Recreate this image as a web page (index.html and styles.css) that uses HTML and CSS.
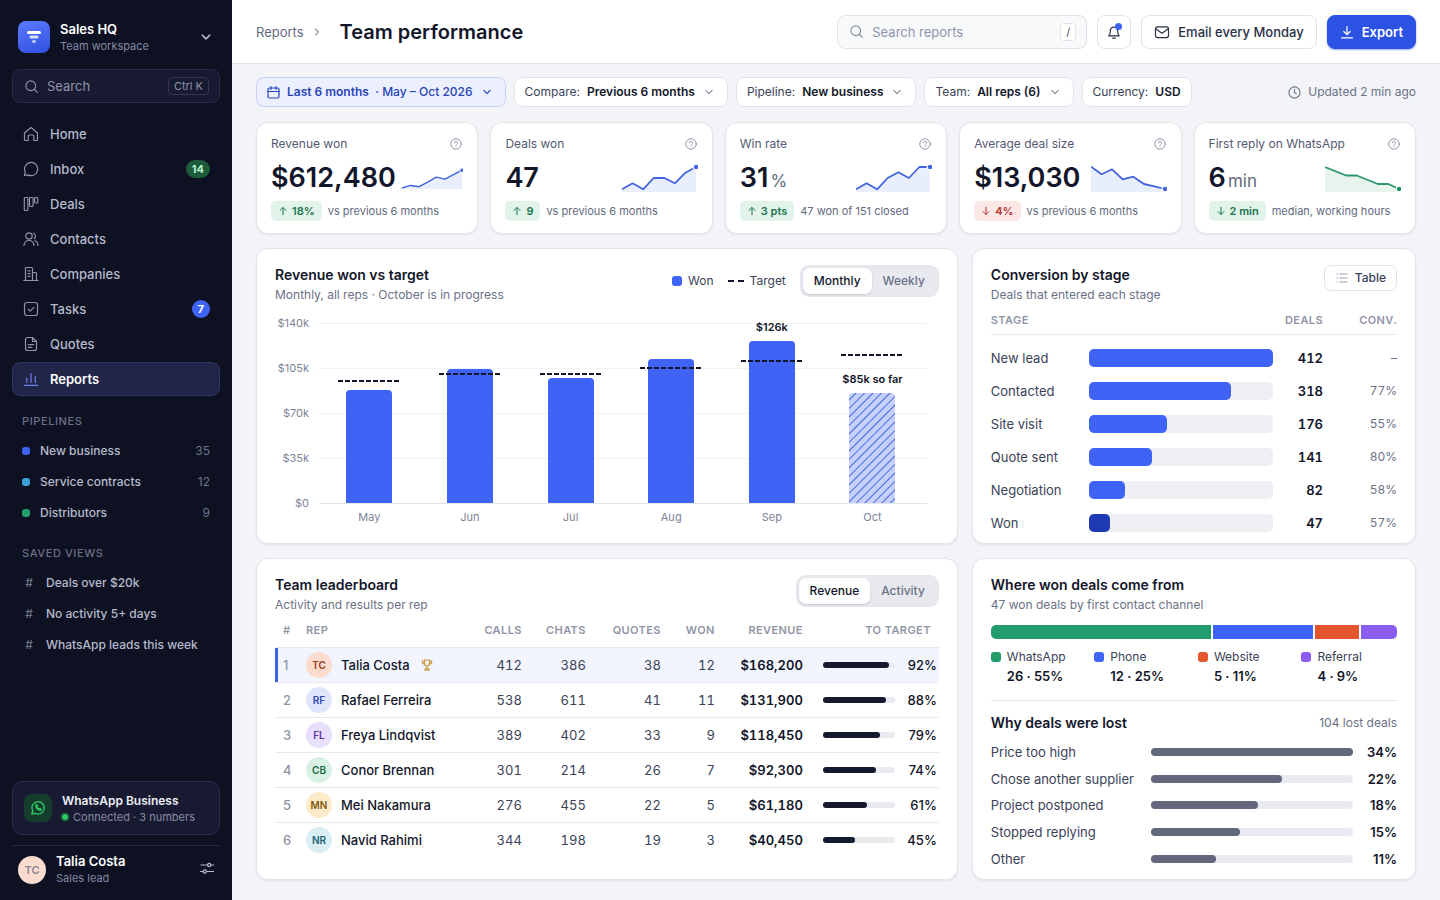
FILE: index.html
```
<!DOCTYPE html>
<html lang="en">
<head>
    <meta charset="UTF-8">
    <meta name="viewport" content="width=device-width, initial-scale=1.0">
    <title>Team performance - Sales HQ</title>
    <link rel="stylesheet" href="styles.css">
</head>
<body>
    <!-- shared icons -->
    <svg class="sprite" aria-hidden="true">
        <symbol id="i-search" viewBox="0 0 16 16"><circle cx="7.2" cy="7.2" r="5.200"/><path d="M11.200 11.200l3 3"/></symbol>
        <symbol id="i-down" viewBox="0 0 16 16"><path d="M3 5.500l5 5 5-5" stroke-width="1.900"/></symbol>
        <symbol id="i-help" viewBox="0 0 16 16"><circle cx="8" cy="8" r="7"/><path d="M6 6.300a2 2 0 1 1 2.900 1.800c-.6.3-.9.6-.9 1.200M8 11.500v.2"/></symbol>
        <symbol id="i-up-arrow" viewBox="0 0 12 12"><path d="M6 10.500V2M2.500 5.300L6 1.800l3.500 3.500"/></symbol>
        <symbol id="i-down-arrow" viewBox="0 0 12 12"><path d="M6 1.500V10M2.500 6.700L6 10.200l3.500-3.500"/></symbol>
    </svg>

    <div class="app">
        <aside class="sidebar">
            <button class="brand" type="button">
                <span class="brand-logo">
                    <svg width="32" height="32" viewBox="0 0 32 32"><rect x="9" y="10" width="14" height="3" rx="1.500" fill="#fff"/><rect x="11.500" y="14.500" width="9" height="3" rx="1.500" fill="#fff" opacity=".8"/><rect x="14" y="19" width="4" height="3" rx="1.500" fill="#fff" opacity=".65"/></svg>
                </span>
                <span class="brand-text">
                    <strong>Sales HQ</strong>
                    <small>Team workspace</small>
                </span>
                <svg class="icon" width="12" height="12"><use href="#i-down"/></svg>
            </button>

            <label class="side-search">
                <svg class="icon" width="15" height="15"><use href="#i-search"/></svg>
                <input type="text" placeholder="Search" aria-label="Search">
                <kbd>Ctrl K</kbd>
            </label>

            <nav class="nav">
                <a href="#"><svg class="icon" width="16" height="16" viewBox="0 0 16 16"><path d="M1.500 7L8 1.500 14.500 7v6.500a1 1 0 0 1-1 1h-2.700V10a1 1 0 0 0-1-1H6.200a1 1 0 0 0-1 1v4.500H2.500a1 1 0 0 1-1-1z"/></svg>Home</a>
                <a href="#"><svg class="icon" width="16" height="16" viewBox="0 0 16 16"><path d="M1.500 14.500l.8-3.300A6.600 6.600 0 1 1 5 13.900z"/></svg>Inbox<span class="badge badge-green">14</span></a>
                <a href="#"><svg class="icon" width="16" height="16" viewBox="0 0 16 16"><rect x="1.300" y="1.500" width="3.600" height="13" rx="1"/><rect x="6.500" y="1.500" width="3.600" height="9" rx="1"/><rect x="11.600" y="1.500" width="3.200" height="5.500" rx="1"/></svg>Deals</a>
                <a href="#"><svg class="icon" width="16" height="16" viewBox="0 0 16 16"><circle cx="6" cy="5" r="3.200"/><path d="M1 14.500c.2-3 2-5 5-5s4.800 2 5 5M10.500 2.200a3.200 3.200 0 0 1 .8 5.500M12 9.700c1.900.6 2.900 2.400 3 4.800"/></svg>Contacts</a>
                <a href="#"><svg class="icon" width="16" height="16" viewBox="0 0 16 16"><path d="M.8 14.500h14.400M2.500 14.500v-12a1 1 0 0 1 1-1h5a1 1 0 0 1 1 1v12M9.500 6.500h3a1 1 0 0 1 1 1v7M5 4.800h2M5 7.600h2M5 10.400h2"/></svg>Companies</a>
                <a href="#"><svg class="icon" width="16" height="16" viewBox="0 0 16 16"><rect x="1.500" y="1.500" width="13" height="13" rx="2.500"/><path d="M5.200 8.200l2 2 3.700-3.900"/></svg>Tasks<span class="badge badge-blue">7</span></a>
                <a href="#"><svg class="icon" width="16" height="16" viewBox="0 0 16 16"><path d="M9.500 1.500h-5a2 2 0 0 0-2 2v9a2 2 0 0 0 2 2h7a2 2 0 0 0 2-2v-7zM9.500 1.500v4h4M5.300 8.700h5.400M5.300 11.300h3.400"/></svg>Quotes</a>
                <a href="#" class="active"><svg class="icon" width="16" height="16" viewBox="0 0 16 16"><path d="M1.500 14.300h13M3.700 11.500V7M8 11.500V2.500M12.300 11.500V5.500"/></svg>Reports</a>
            </nav>

            <h2 class="side-title">Pipelines</h2>
            <ul class="side-list">
                <li><a href="#"><i class="dot blue"></i>New business<span>35</span></a></li>
                <li><a href="#"><i class="dot sky"></i>Service contracts<span>12</span></a></li>
                <li><a href="#"><i class="dot green"></i>Distributors<span>9</span></a></li>
            </ul>

            <h2 class="side-title">Saved views</h2>
            <ul class="side-list">
                <li><a href="#"><b>#</b>Deals over $20k</a></li>
                <li><a href="#"><b>#</b>No activity 5+ days</a></li>
                <li><a href="#"><b>#</b>WhatsApp leads this week</a></li>
            </ul>

            <div class="channel">
                <span class="channel-icon">
                    <svg width="16" height="16" viewBox="0 0 16 16" fill="none" stroke="#2fcb6b" stroke-width="1.300" stroke-linecap="round" stroke-linejoin="round"><path d="M1.800 14.200l.9-3.200A6.200 6.200 0 1 1 5 13.300z"/><path d="M5.700 5.200c-.5 2.500 2.600 5.600 5.100 5.100l.4-1.100-1.500-.8-.8.600c-.8-.3-1.600-1.100-1.900-1.900l.6-.8-.8-1.500z"/></svg>
                </span>
                <div>
                    <strong>WhatsApp Business</strong>
                    <small><i class="status"></i>Connected · 3 numbers</small>
                </div>
            </div>

            <div class="user">
                <span class="user-avatar">TC</span>
                <div class="brand-text">
                    <strong>Talia Costa</strong>
                    <small>Sales lead</small>
                </div>
                <button type="button" aria-label="Settings"><svg class="icon" width="14" height="14" viewBox="0 0 14 14"><path d="M1 4h6.500M11 4h2.500M.5 10.500H3M6.500 10.500h7"/><circle cx="9.200" cy="4" r="1.600"/><circle cx="4.800" cy="10.500" r="1.600"/></svg></button>
            </div>
        </aside>

        <div class="main">
            <header class="topbar">
                <a href="#" class="crumb">Reports</a>
                <svg class="icon crumb-sep" width="10" height="10" viewBox="0 0 10 10"><path d="M3.500 2L6.500 5 3.500 8"/></svg>
                <h1>Team performance</h1>
                <label class="top-search">
                    <svg class="icon" width="15" height="15"><use href="#i-search"/></svg>
                    <input type="text" placeholder="Search reports" aria-label="Search reports">
                    <kbd>/</kbd>
                </label>
                <button class="btn btn-icon" type="button" aria-label="Notifications">
                    <svg class="icon" width="16" height="16" viewBox="0 0 16 16"><path d="M2.800 11.800c1.200-1.100 1.500-2.300 1.500-4.600C4.300 4.800 5.800 3.200 8 3.200s3.700 1.600 3.700 4c0 2.300.3 3.500 1.500 4.600zM6.700 14.200h2.600"/></svg>
                    <i class="notify"></i>
                </button>
                <button class="btn" type="button"><svg class="icon" width="16" height="16" viewBox="0 0 16 16"><rect x="1.500" y="2.800" width="13" height="10.800" rx="2"/><path d="M2 5l6 4.200L14 5"/></svg>Email every Monday</button>
                <button class="btn btn-primary" type="button"><svg class="icon" width="14" height="14" viewBox="0 0 14 14"><path d="M7 1.500v8M3.800 6.500L7 9.700l3.200-3.200M1.500 12.800h11"/></svg>Export</button>
            </header>

            <main class="content">
                <div class="filters">
                    <button class="chip chip-active" type="button"><svg class="icon" width="13" height="13" viewBox="0 0 13 13"><rect x="1" y="2" width="11" height="10" rx="1.500"/><path d="M1 5.500h11M4 .7v2.600M9 .7v2.600"/></svg><span><b>Last 6 months</b> &nbsp;· May – Oct 2026</span><svg class="icon caret" width="10" height="10"><use href="#i-down"/></svg></button>
                    <label class="chip">Compare: <select><option>Previous 6 months</option><option>Previous year</option></select><svg class="icon caret" width="10" height="10"><use href="#i-down"/></svg></label>
                    <label class="chip">Pipeline: <select><option>New business</option><option>Distributors</option></select><svg class="icon caret" width="10" height="10"><use href="#i-down"/></svg></label>
                    <label class="chip">Team: <select><option>All reps (6)</option><option>Only me</option></select><svg class="icon caret" width="10" height="10"><use href="#i-down"/></svg></label>
                    <button class="chip" type="button">Currency: <b>USD</b></button>
                    <span class="updated"><svg class="icon" width="13" height="13" viewBox="0 0 14 14"><circle cx="7" cy="7" r="6"/><path d="M7 3.500V7l2 1.500"/></svg>Updated 2 min ago</span>
                </div>

                <section class="kpis">
                    <article class="card kpi">
                        <h3>Revenue won <svg class="icon" width="12" height="12"><use href="#i-help"/></svg></h3>
                        <div class="kpi-row">
                            <strong>$612,480</strong>
                            <svg class="spark" viewBox="0 0 76 28"><path class="area" d="M0 26L10.600 22.700 21.100 24.300 31.700 18.700 42.300 12.500 52.900 15 63.400 9.300 74 4V28H0z"/><path class="line" d="M0 26L10.600 22.700 21.100 24.300 31.700 18.700 42.300 12.500 52.900 15 63.400 9.300 74 4"/><circle cx="74" cy="4" r="2.800"/></svg>
                        </div>
                        <p><span class="delta up"><svg class="icon" width="10" height="10"><use href="#i-up-arrow"/></svg>18%</span>vs previous 6 months</p>
                    </article>
                    <article class="card kpi">
                        <h3>Deals won <svg class="icon" width="12" height="12"><use href="#i-help"/></svg></h3>
                        <div class="kpi-row">
                            <strong>47</strong>
                            <svg class="spark" viewBox="0 0 76 28"><path class="area" d="M0 25.300L10.600 19.300 21.100 25.300 31.700 14H42.300L52.900 19.300 63.400 8.700 74 3V28H0z"/><path class="line" d="M0 25.300L10.600 19.300 21.100 25.300 31.700 14H42.300L52.900 19.300 63.400 8.700 74 3"/><circle cx="74" cy="3" r="2.800"/></svg>
                        </div>
                        <p><span class="delta up"><svg class="icon" width="10" height="10"><use href="#i-up-arrow"/></svg>9</span>vs previous 6 months</p>
                    </article>
                    <article class="card kpi">
                        <h3>Win rate <svg class="icon" width="12" height="12"><use href="#i-help"/></svg></h3>
                        <div class="kpi-row">
                            <strong>31<small>%</small></strong>
                            <svg class="spark" viewBox="0 0 76 28"><path class="area" d="M0 25.300L10.600 19.300 21.100 25.300 31.700 14 42.300 8.300 52.900 14 63.400 3H74V28H0z"/><path class="line" d="M0 25.300L10.600 19.300 21.100 25.300 31.700 14 42.300 8.300 52.900 14 63.400 3H74"/><circle cx="74" cy="3" r="2.800"/></svg>
                        </div>
                        <p><span class="delta up"><svg class="icon" width="10" height="10"><use href="#i-up-arrow"/></svg>3 pts</span>47 won of 151 closed</p>
                    </article>
                    <article class="card kpi">
                        <h3>Average deal size <svg class="icon" width="12" height="12"><use href="#i-help"/></svg></h3>
                        <div class="kpi-row">
                            <strong>$13,030</strong>
                            <svg class="spark" viewBox="0 0 76 28"><path class="area" d="M0 2.700L10.600 10.300 21.100 5.300 31.700 15.300 42.300 12.700 52.900 20 63.400 22.300 74 25V28H0z"/><path class="line" d="M0 2.700L10.600 10.300 21.100 5.300 31.700 15.300 42.300 12.700 52.900 20 63.400 22.300 74 25"/><circle cx="74" cy="25" r="2.800"/></svg>
                        </div>
                        <p><span class="delta down"><svg class="icon" width="10" height="10"><use href="#i-down-arrow"/></svg>4%</span>vs previous 6 months</p>
                    </article>
                    <article class="card kpi">
                        <h3>First reply on WhatsApp <svg class="icon" width="12" height="12"><use href="#i-help"/></svg></h3>
                        <div class="kpi-row">
                            <strong>6<small>min</small></strong>
                            <svg class="spark spark-green" viewBox="0 0 76 28"><path class="area" d="M0 3L21.100 11.500H31.700L52.900 20H63.400L74 25V28H0z"/><path class="line" d="M0 3L21.100 11.500H31.700L52.900 20H63.400L74 25"/><circle cx="74" cy="25" r="2.800"/></svg>
                        </div>
                        <p><span class="delta up"><svg class="icon" width="10" height="10"><use href="#i-down-arrow"/></svg>2 min</span>median, working hours</p>
                    </article>
                </section>

                <section class="panels">
                    <article class="card panel">
                        <div class="panel-head">
                            <div>
                                <h2>Revenue won vs target</h2>
                                <p>Monthly, all reps · October is in progress</p>
                            </div>
                            <div class="legend">
                                <span><i class="swatch blue"></i>Won</span>
                                <span><i class="dash"></i>Target</span>
                            </div>
                            <div class="segmented">
                                <button class="on" type="button">Monthly</button>
                                <button type="button">Weekly</button>
                            </div>
                        </div>
                        <div class="chart">
                            <div class="y-axis">
                                <span>$140k</span><span>$105k</span><span>$70k</span><span>$35k</span><span>$0</span>
                            </div>
                            <div class="plot">
                                <div class="month"><i class="bar" style="height: 62.9%"></i><i class="target" style="bottom: 67.4%"></i></div>
                                <div class="month"><i class="bar" style="height: 74.3%"></i><i class="target" style="bottom: 70.9%"></i></div>
                                <div class="month"><i class="bar" style="height: 69.3%"></i><i class="target" style="bottom: 70.9%"></i></div>
                                <div class="month"><i class="bar" style="height: 80%"></i><i class="target" style="bottom: 74.5%"></i></div>
                                <div class="month"><span>$126k</span><i class="bar" style="height: 90%"></i><i class="target" style="bottom: 78.1%"></i></div>
                                <div class="month"><span>$85k so far</span><i class="bar partial" style="height: 61%"></i><i class="target" style="bottom: 81.6%"></i></div>
                            </div>
                            <div class="x-axis">
                                <span>May</span><span>Jun</span><span>Jul</span><span>Aug</span><span>Sep</span><span>Oct</span>
                            </div>
                        </div>
                    </article>

                    <article class="card panel">
                        <div class="panel-head">
                            <div>
                                <h2>Conversion by stage</h2>
                                <p>Deals that entered each stage</p>
                            </div>
                            <button class="btn-small" type="button"><svg class="icon" width="12" height="12" viewBox="0 0 12 12"><path d="M4 2h7M4 6h7M4 10h7M1 2h.4M1 6h.4M1 10h.4"/></svg>Table</button>
                        </div>
                        <table class="funnel">
                            <thead>
                                <tr><th class="c-stage">Stage</th><th></th><th class="c-deals num">Deals</th><th class="c-conv num">Conv.</th></tr>
                            </thead>
                            <tbody>
                                <tr><td>New lead</td><td><div class="track"><i style="width: 100%"></i></div></td><td class="num total">412</td><td class="num conv">–</td></tr>
                                <tr><td>Contacted</td><td><div class="track"><i style="width: 77.2%"></i></div></td><td class="num total">318</td><td class="num conv">77%</td></tr>
                                <tr><td>Site visit</td><td><div class="track"><i style="width: 42.7%"></i></div></td><td class="num total">176</td><td class="num conv">55%</td></tr>
                                <tr><td>Quote sent</td><td><div class="track"><i style="width: 34.2%"></i></div></td><td class="num total">141</td><td class="num conv">80%</td></tr>
                                <tr><td>Negotiation</td><td><div class="track"><i style="width: 19.9%"></i></div></td><td class="num total">82</td><td class="num conv">58%</td></tr>
                                <tr><td>Won</td><td><div class="track"><i class="won" style="width: 11.4%"></i></div></td><td class="num total">47</td><td class="num conv">57%</td></tr>
                            </tbody>
                        </table>
                    </article>

                    <article class="card panel">
                        <div class="panel-head">
                            <div>
                                <h2>Team leaderboard</h2>
                                <p>Activity and results per rep</p>
                            </div>
                            <div class="segmented">
                                <button class="on" type="button">Revenue</button>
                                <button type="button">Activity</button>
                            </div>
                        </div>
                        <table class="board">
                            <thead>
                                <tr><th class="c-rank">#</th><th>Rep</th><th class="c-calls num">Calls</th><th class="c-chats num">Chats</th><th class="c-quotes num">Quotes</th><th class="c-won num">Won</th><th class="c-revenue num">Revenue</th><th class="c-target num">To target</th></tr>
                            </thead>
                            <tbody>
                                <tr class="leader"><td class="rank">1</td><td><div class="rep"><span class="avatar a1">TC</span>Talia Costa<svg class="trophy" width="12" height="12" viewBox="0 0 12 12"><path d="M3.500 1h5v3.500a2.500 2.500 0 0 1-5 0zM3.500 2H1.200c0 2 .8 3 2.500 3M8.500 2h2.300c0 2-.8 3-2.500 3M6 7v2.500M3.800 11.200h4.400L7.500 9.500h-3z"/></svg></div></td><td class="num">412</td><td class="num">386</td><td class="num">38</td><td class="num">12</td><td class="num strong">$168,200</td><td class="goal"><div><span class="meter"><i style="width: 92%"></i></span>92%</div></td></tr>
                                <tr><td class="rank">2</td><td><div class="rep"><span class="avatar a2">RF</span>Rafael Ferreira</div></td><td class="num">538</td><td class="num">611</td><td class="num">41</td><td class="num">11</td><td class="num strong">$131,900</td><td class="goal"><div><span class="meter"><i style="width: 88%"></i></span>88%</div></td></tr>
                                <tr><td class="rank">3</td><td><div class="rep"><span class="avatar a3">FL</span>Freya Lindqvist</div></td><td class="num">389</td><td class="num">402</td><td class="num">33</td><td class="num">9</td><td class="num strong">$118,450</td><td class="goal"><div><span class="meter"><i style="width: 79%"></i></span>79%</div></td></tr>
                                <tr><td class="rank">4</td><td><div class="rep"><span class="avatar a4">CB</span>Conor Brennan</div></td><td class="num">301</td><td class="num">214</td><td class="num">26</td><td class="num">7</td><td class="num strong">$92,300</td><td class="goal"><div><span class="meter"><i style="width: 74%"></i></span>74%</div></td></tr>
                                <tr><td class="rank">5</td><td><div class="rep"><span class="avatar a5">MN</span>Mei Nakamura</div></td><td class="num">276</td><td class="num">455</td><td class="num">22</td><td class="num">5</td><td class="num strong">$61,180</td><td class="goal"><div><span class="meter"><i style="width: 61%"></i></span>61%</div></td></tr>
                                <tr><td class="rank">6</td><td><div class="rep"><span class="avatar a6">NR</span>Navid Rahimi</div></td><td class="num">344</td><td class="num">198</td><td class="num">19</td><td class="num">3</td><td class="num strong">$40,450</td><td class="goal"><div><span class="meter"><i style="width: 45%"></i></span>45%</div></td></tr>
                            </tbody>
                        </table>
                    </article>

                    <article class="card panel sources">
                        <div class="panel-head">
                            <div>
                                <h2>Where won deals come from</h2>
                                <p>47 won deals by first contact channel</p>
                            </div>
                        </div>
                        <div class="stack">
                            <i class="green" style="flex-grow: 55"></i>
                            <i class="blue" style="flex-grow: 25"></i>
                            <i class="orange" style="flex-grow: 11"></i>
                            <i class="purple" style="flex-grow: 9"></i>
                        </div>
                        <ul class="channels">
                            <li><i class="swatch green"></i>WhatsApp<b>26 · 55%</b></li>
                            <li><i class="swatch blue"></i>Phone<b>12 · 25%</b></li>
                            <li><i class="swatch orange"></i>Website<b>5 · 11%</b></li>
                            <li><i class="swatch purple"></i>Referral<b>4 · 9%</b></li>
                        </ul>
                        <div class="lost-head">
                            <h2>Why deals were lost</h2>
                            <span>104 lost deals</span>
                        </div>
                        <ul class="reasons">
                            <li>Price too high<span class="meter"><i style="width: 100%"></i></span><b>34%</b></li>
                            <li>Chose another supplier<span class="meter"><i style="width: 64.7%"></i></span><b>22%</b></li>
                            <li>Project postponed<span class="meter"><i style="width: 52.9%"></i></span><b>18%</b></li>
                            <li>Stopped replying<span class="meter"><i style="width: 44.1%"></i></span><b>15%</b></li>
                            <li>Other<span class="meter"><i style="width: 32.4%"></i></span><b>11%</b></li>
                        </ul>
                    </article>
                </section>
            </main>
        </div>
    </div>
</body>
</html>
```

FILE: styles.css
```
* {
    box-sizing: border-box;
}

body {
    margin: 0;
    font-family: Inter, "Liberation Sans", sans-serif;
    font-size: 13px;
    line-height: 18px;
    color: #3b4258;
    background: #f3f4f8;
}

h1, h2, h3, p, ul {
    margin: 0;
    padding: 0;
}

ul {
    list-style: none;
}

a {
    color: inherit;
    text-decoration: none;
}

button, input, select {
    font: inherit;
    color: inherit;
    margin: 0;
    padding: 0;
    border: 0;
    background: none;
}

button {
    cursor: pointer;
}

table {
    width: 100%;
    border-collapse: separate;
    border-spacing: 0;
    table-layout: fixed;
}

.sprite {
    display: none;
}

.icon {
    flex: none;
    fill: none;
    stroke: currentColor;
    stroke-width: 1.2;
    stroke-linecap: round;
    stroke-linejoin: round;
}

.blue { background: #3e63f5; }
.sky { background: #3b9fd8; }
.green { background: #229e6c; }
.orange { background: #e4572e; }
.purple { background: #8b5cf0; }

.app {
    display: flex;
    min-height: 100vh;
}

/* Sidebar */
.sidebar {
    flex: none;
    display: flex;
    flex-direction: column;
    width: 232px;
    padding: 17px 12px 14px;
    background: #0d1121;
    color: #b5bacd;
    font-weight: 500;
}

.brand {
    display: flex;
    align-items: center;
    gap: 10px;
    height: 40px;
    padding: 0 8px 0 6px;
    text-align: left;
}

.brand-logo {
    height: 32px;
    border-radius: 8px;
    background: linear-gradient(160deg, #5b7bff, #2f4fe0);
}

.brand-text {
    flex: 1;
    font-weight: 400;
}

.brand-text strong,
.brand-text small {
    display: block;
    font-size: 13px;
    line-height: 17px;
    color: #fff;
    font-weight: 600;
}

.brand-text small {
    font-size: 11px;
    line-height: 16px;
    color: #858aa3;
    font-weight: 400;
}

.side-search {
    display: flex;
    align-items: center;
    gap: 8px;
    height: 34px;
    margin: 12px 0 14px;
    padding: 0 10px 0 11px;
    border: 1px solid #292c47;
    border-radius: 8px;
    background: #181a32;
    color: #8f94ab;
    font-weight: 400;
}

input {
    flex: 1;
    min-width: 0;
    outline: none;
}

input::placeholder {
    color: #8f94ab;
    opacity: 1;
}

kbd {
    padding: 0 5px;
    border: 1px solid #34374f;
    border-radius: 4px;
    font-family: inherit;
    font-size: 11px;
    line-height: 16px;
}

.nav {
    display: flex;
    flex-direction: column;
    gap: 1px;
}

.nav a {
    display: flex;
    align-items: center;
    gap: 11px;
    height: 34px;
    padding: 0 9px 0 10px;
    border: 1px solid transparent;
    border-radius: 8px;
}

.nav .icon {
    color: #8f94ab;
}

.nav .active {
    border-color: #303560;
    background: #212548;
    color: #fff;
    font-weight: 600;
}

.nav .active .icon {
    color: #6f80f5;
}

.badge {
    margin-left: auto;
    padding: 0 6px;
    border-radius: 9px;
    font-size: 11px;
    font-weight: 700;
    line-height: 18px;
    color: #fff;
}

.badge-green {
    background: #1d5b3c;
    color: #b6f3cc;
}

.badge-blue {
    background: #3e63f5;
}

.side-title {
    margin: 16px 10px 5px;
    font-size: 11px;
    line-height: 18px;
    font-weight: 500;
    letter-spacing: 0.6px;
    text-transform: uppercase;
    color: #6a6f87;
}

.side-list a {
    display: flex;
    align-items: center;
    gap: 10px;
    height: 31px;
    padding: 0 10px;
    font-size: 12px;
    white-space: nowrap;
}

.side-list span {
    margin-left: auto;
    font-weight: 400;
    color: #6f748c;
}

.side-list b {
    width: 14px;
    text-align: center;
    font-weight: 500;
    color: #6f748c;
}

.dot {
    width: 8px;
    height: 8px;
    border-radius: 3px;
}

.channel {
    display: flex;
    align-items: center;
    gap: 10px;
    height: 54px;
    margin-top: auto;
    padding: 0 11px;
    border: 1px solid #292c47;
    border-radius: 10px;
    background: #181a32;
}

.channel-icon {
    display: grid;
    place-items: center;
    width: 28px;
    height: 28px;
    border-radius: 8px;
    background: #153d2b;
}

.channel strong {
    display: block;
    font-size: 12px;
    line-height: 17px;
    font-weight: 600;
    color: #eceef6;
}

.channel small {
    display: flex;
    align-items: center;
    gap: 5px;
    font-size: 11px;
    line-height: 16px;
    font-weight: 400;
    color: #858aa3;
}

.status {
    width: 6px;
    height: 6px;
    border-radius: 50%;
    background: #2fcb6b;
    box-shadow: 0 0 0 2px #164431;
}

.user {
    display: flex;
    align-items: center;
    gap: 10px;
    margin-top: 10px;
    padding: 7px 6px 0;
    border-top: 1px solid #25283d;
}

.user-avatar {
    width: 28px;
    border-radius: 50%;
    background: #fbdccf;
    color: #8c8496;
    font-size: 11px;
    line-height: 28px;
    font-weight: 600;
    text-align: center;
}

/* Top bar */
.main {
    flex: 1;
    display: flex;
    flex-direction: column;
    min-width: 0;
}

.topbar {
    display: flex;
    align-items: center;
    gap: 10px;
    height: 64px;
    padding: 0 24px;
    border-bottom: 1px solid #e3e5ec;
    background: #fff;
}

.crumb {
    color: #636a80;
}

.crumb-sep {
    margin: 0 8px 0 -2px;
    color: #9298aa;
}

.topbar h1 {
    flex: 1;
    font-size: 20px;
    line-height: 28px;
    font-weight: 600;
    color: #12162a;
    white-space: nowrap;
}

.top-search {
    display: flex;
    align-items: center;
    gap: 8px;
    width: 250px;
    height: 34px;
    padding: 0 10px 0 11px;
    border: 1px solid #e1e4ea;
    border-radius: 8px;
    background: #f8f9fb;
    color: #858b9c;
}

.top-search kbd {
    border-color: #dfe2e9;
    background: #fff;
    color: #4b5164;
}

.btn {
    position: relative;
    display: flex;
    align-items: center;
    gap: 8px;
    height: 34px;
    padding: 0 12px;
    border: 1px solid #e1e4ea;
    border-radius: 8px;
    background: #fff;
    color: #2a3046;
    font-weight: 500;
    white-space: nowrap;
}

.btn-icon {
    padding: 0 8px;
}

.notify {
    position: absolute;
    top: 7px;
    right: 8px;
    width: 7px;
    height: 7px;
    border-radius: 50%;
    background: #3e63f5;
}

.btn-primary {
    border-color: #2c52e4;
    background: #2c52e4;
    color: #fff;
    font-weight: 600;
    box-shadow: 0 1px 2px rgba(44, 82, 228, 0.5);
}

/* Content */
.content {
    flex: 1;
    display: flex;
    flex-direction: column;
    gap: 14px;
    padding: 13px 24px 20px;
}

.filters {
    display: flex;
    align-items: center;
    gap: 8px;
    padding-bottom: 1px;
}

.chip {
    display: flex;
    align-items: center;
    gap: 7px;
    height: 30px;
    padding: 0 10px;
    border: 1px solid #e1e4ea;
    border-radius: 8px;
    background: #fff;
    font-size: 12px;
    white-space: nowrap;
}

.chip b,
.chip select {
    font-weight: 600;
    color: #12162a;
}

.chip select {
    appearance: none;
    field-sizing: content;
}

.chip .icon {
    color: #868c9f;
}

.chip .caret {
    margin: 0 3px 0 2px;
}

.chip-active,
.chip-active b,
.chip-active .icon {
    color: #2946b8;
}

.chip-active {
    border-color: #c5cffa;
    background: #ebeffe;
    font-weight: 500;
}

.updated {
    display: flex;
    align-items: center;
    gap: 7px;
    margin-left: auto;
    font-size: 12px;
    color: #6b7186;
}

.card {
    min-width: 0;
    border: 1px solid #e3e5ec;
    border-radius: 12px;
    background: #fff;
    box-shadow: 0 1px 2px rgba(18, 22, 42, 0.08);
}

.kpis {
    display: grid;
    grid-template-columns: repeat(5, 1fr);
    gap: 12px;
}

.kpi {
    padding: 12px 14px;
}

.kpi h3 {
    display: flex;
    align-items: center;
    justify-content: space-between;
    padding-right: 1px;
    font-size: 12px;
    line-height: 18px;
    font-weight: 400;
    color: #535a70;
}

.kpi h3 .icon {
    color: #868c9f;
}

.kpi-row {
    display: flex;
    align-items: center;
    justify-content: space-between;
    gap: 6px;
    height: 32px;
    margin: 9px 0 7px;
}

.kpi-row strong {
    font-size: 27px;
    line-height: 32px;
    font-weight: 600;
    color: #12162a;
}

.kpi-row small {
    margin-left: 2px;
    font-size: 17px;
    line-height: 17px;
    font-weight: 400;
    color: #636a80;
}

.spark {
    flex: 0 1 76px;
    min-width: 0;
}

.spark .area {
    fill: #e9eefd;
}

.spark .line {
    fill: none;
    stroke: #4264dc;
    stroke-width: 1.8;
    stroke-linejoin: round;
}

.spark circle {
    fill: #3e63e4;
    stroke: #fff;
    stroke-width: 1.2;
}

.spark-green .area { fill: #e6f4ed; }
.spark-green .line { stroke: #2d976b; }
.spark-green circle { fill: #229065; }

.kpi p {
    display: flex;
    align-items: center;
    gap: 6px;
    font-size: 11px;
    color: #636a80;
    white-space: nowrap;
}

.delta {
    display: flex;
    align-items: center;
    gap: 4px;
    padding: 0 7px;
    border-radius: 5px;
    line-height: 20px;
    font-weight: 600;
}

.up {
    background: #e2f3ea;
    color: #1c7551;
}

.down {
    background: #fde8e8;
    color: #b63232;
}

/* Panels */
.panels {
    flex: 1;
    display: grid;
    grid-template-columns: 158fr 100fr;
    grid-template-rows: auto 1fr;
    gap: 14px;
}

.panel {
    padding: 16px 18px 4px;
}

.panel-head {
    display: flex;
    align-items: flex-start;
    gap: 14px;
    height: 40px;
}

.panel-head > :first-child {
    flex: 1;
}

.panel h2 {
    font-size: 14px;
    line-height: 20px;
    font-weight: 600;
    color: #12162a;
}

.panel-head p {
    font-size: 12px;
    line-height: 20px;
    color: #6b7186;
}

.legend {
    display: flex;
    gap: 14px;
    font-size: 12px;
    line-height: 32px;
}

.legend span {
    display: flex;
    align-items: center;
    gap: 6px;
}

.swatch {
    width: 10px;
    height: 10px;
    border-radius: 3px;
}

.dash {
    width: 16px;
    height: 2px;
    background: repeating-linear-gradient(90deg, #12162a 0 6px, transparent 6px 10px);
}

.segmented {
    display: flex;
    padding: 3px;
    border-radius: 9px;
    background: #e8e9ef;
}

.segmented button {
    height: 26px;
    padding: 0 11px;
    border-radius: 7px;
    font-weight: 500;
    font-size: 12px;
    color: #6b7186;
}

.segmented .on {
    background: #fff;
    color: #12162a;
    box-shadow: 0 1px 2px rgba(18, 22, 42, 0.15);
}

.btn-small {
    display: flex;
    align-items: center;
    gap: 7px;
    height: 26px;
    padding: 0 10px 0 11px;
    border: 1px solid #e1e4ea;
    border-radius: 7px;
    font-size: 12px;
    font-weight: 500;
}

.btn-small .icon {
    color: #9a9fb0;
}

.chart {
    display: grid;
    grid-template-columns: 34px 1fr;
    grid-template-rows: 181px 18px;
    gap: 4px 10px;
    padding: 18px 12px 0 0;
    font-size: 11px;
    color: #7d8397;
}

.y-axis {
    display: flex;
    flex-direction: column;
    justify-content: space-between;
    margin: -9px 0 -8px;
    text-align: right;
}

.plot,
.x-axis {
    display: grid;
    grid-template-columns: repeat(6, 1fr);
    padding-right: 4px;
}

.plot {
    border-bottom: 1px solid #e3e5ec;
    background: repeating-linear-gradient(#f1f2f5 0 1px, transparent 1px 45px);
}

.x-axis {
    grid-column: 2;
    text-align: center;
}

.month {
    position: relative;
    display: flex;
    flex-direction: column;
    align-items: center;
    justify-content: flex-end;
}

.month span {
    margin-bottom: 5px;
    font-weight: 600;
    color: #12162a;
}

.bar {
    flex: none;
    width: 46px;
    border-radius: 4px 4px 0 0;
    background: #3e63f5;
}

.partial {
    background: repeating-linear-gradient(135deg, #c5d1fc 0 4px, #4a69dc 5px, #c5d1fc 6px);
}

.target {
    position: absolute;
    width: 62px;
    height: 2px;
    background: repeating-linear-gradient(90deg, #12162a 0 5px, transparent 5px 7px);
}

th {
    padding: 0;
    text-align: left;
    font-size: 11px;
    font-weight: 600;
    letter-spacing: 0.4px;
    text-transform: uppercase;
    color: #9095a6;
}

td {
    padding: 0;
}

.num {
    text-align: right;
    font-variant-numeric: tabular-nums;
}

.funnel th {
    height: 30px;
    border-bottom: 1px solid #e8eaef;
}

.funnel tbody::before {
    content: "";
    display: block;
    height: 6px;
}

.funnel td {
    height: 33px;
}

.c-stage { width: 98px; }
.c-deals { width: 50px; }
.c-conv { width: 74px; }

.track {
    height: 18px;
    border-radius: 5px;
    background: #eeeff3;
}

.track i {
    display: block;
    height: 18px;
    border-radius: 5px;
    background: #3e63f5;
}

.track .won {
    background: #1e3ab4;
}

.total {
    font-weight: 600;
    color: #12162a;
}

.conv {
    font-size: 12px;
    color: #6b7186;
}

.board th,
.board td {
    padding: 0 8px;
}

.board th {
    height: 32px;
    padding-bottom: 2px;
}

.board td {
    height: 35px;
    border-top: 1px solid #e8eaef;
}

.board .c-rank,
.board .rank {
    width: 23px;
    padding-right: 0;
}

.c-calls, .c-chats { width: 64px; }
.c-quotes { width: 75px; }
.c-won { width: 54px; }
.c-revenue { width: 88px; }
.c-target { width: 128px; }

.rank {
    font-weight: 500;
    color: #9095a6;
}

.leader {
    background: #f2f5fe;
}

.leader .rank {
    box-shadow: inset 3px 0 #3e63e4;
}

.rep {
    display: flex;
    align-items: center;
    gap: 9px;
    font-weight: 500;
    color: #12162a;
    white-space: nowrap;
}

.avatar {
    width: 26px;
    border-radius: 50%;
    font-size: 10px;
    line-height: 26px;
    font-weight: 600;
    text-align: center;
}

.a1 { background: #fbdccf; color: #9a3b1c; }
.a2 { background: #dfe6fc; color: #2f48ae; }
.a3 { background: #e7dffb; color: #5a35a8; }
.a4 { background: #d9f1e4; color: #1c6b49; }
.a5 { background: #fcebc9; color: #7d5a10; }
.a6 { background: #d9eff3; color: #1d6377; }

.trophy {
    margin-left: 2px;
    fill: none;
    stroke: #c8963a;
    stroke-width: 1.2;
    stroke-linejoin: round;
}

.strong {
    font-weight: 600;
    color: #12162a;
}

.board .goal {
    padding: 0 2px 0 12px;
}

.goal div {
    display: flex;
    align-items: center;
    justify-content: space-between;
    font-weight: 500;
    color: #12162a;
}

.meter {
    width: 72px;
    height: 6px;
    border-radius: 4px;
    background: #eaebf0;
}

.meter i {
    display: block;
    height: 100%;
    border-radius: 4px;
    background: #161a2e;
}

/* Won / lost panel */
.sources {
    display: flex;
    flex-direction: column;
    padding-bottom: 7px;
}

.stack {
    display: flex;
    gap: 2px;
    height: 14px;
    margin-top: 10px;
    border-radius: 5px;
    overflow: hidden;
}

.stack i {
    flex-basis: 0;
}

.channels {
    display: grid;
    grid-template-columns: repeat(4, 1fr);
    gap: 8px;
    margin-top: 9px;
    padding-bottom: 14px;
    border-bottom: 1px solid #e8eaef;
}

.channels li {
    display: grid;
    grid-template-columns: 10px 1fr;
    align-items: center;
    column-gap: 6px;
    font-size: 12px;
}

.channels b {
    grid-column: 2;
    font-size: 13px;
    line-height: 20px;
    font-weight: 600;
    color: #12162a;
}

.lost-head {
    display: flex;
    align-items: center;
    justify-content: space-between;
    margin-top: 12px;
    font-size: 12px;
    color: #6b7186;
}

.reasons {
    flex: 1;
    display: flex;
    flex-direction: column;
    justify-content: space-around;
    margin-top: 6px;
}

.reasons li {
    display: grid;
    grid-template-columns: 160px 1fr 44px;
    align-items: center;
}

.reasons .meter {
    width: auto;
    height: 8px;
}

.reasons .meter i {
    background: #62677b;
}

.reasons b {
    text-align: right;
    font-weight: 600;
    color: #12162a;
}
```
